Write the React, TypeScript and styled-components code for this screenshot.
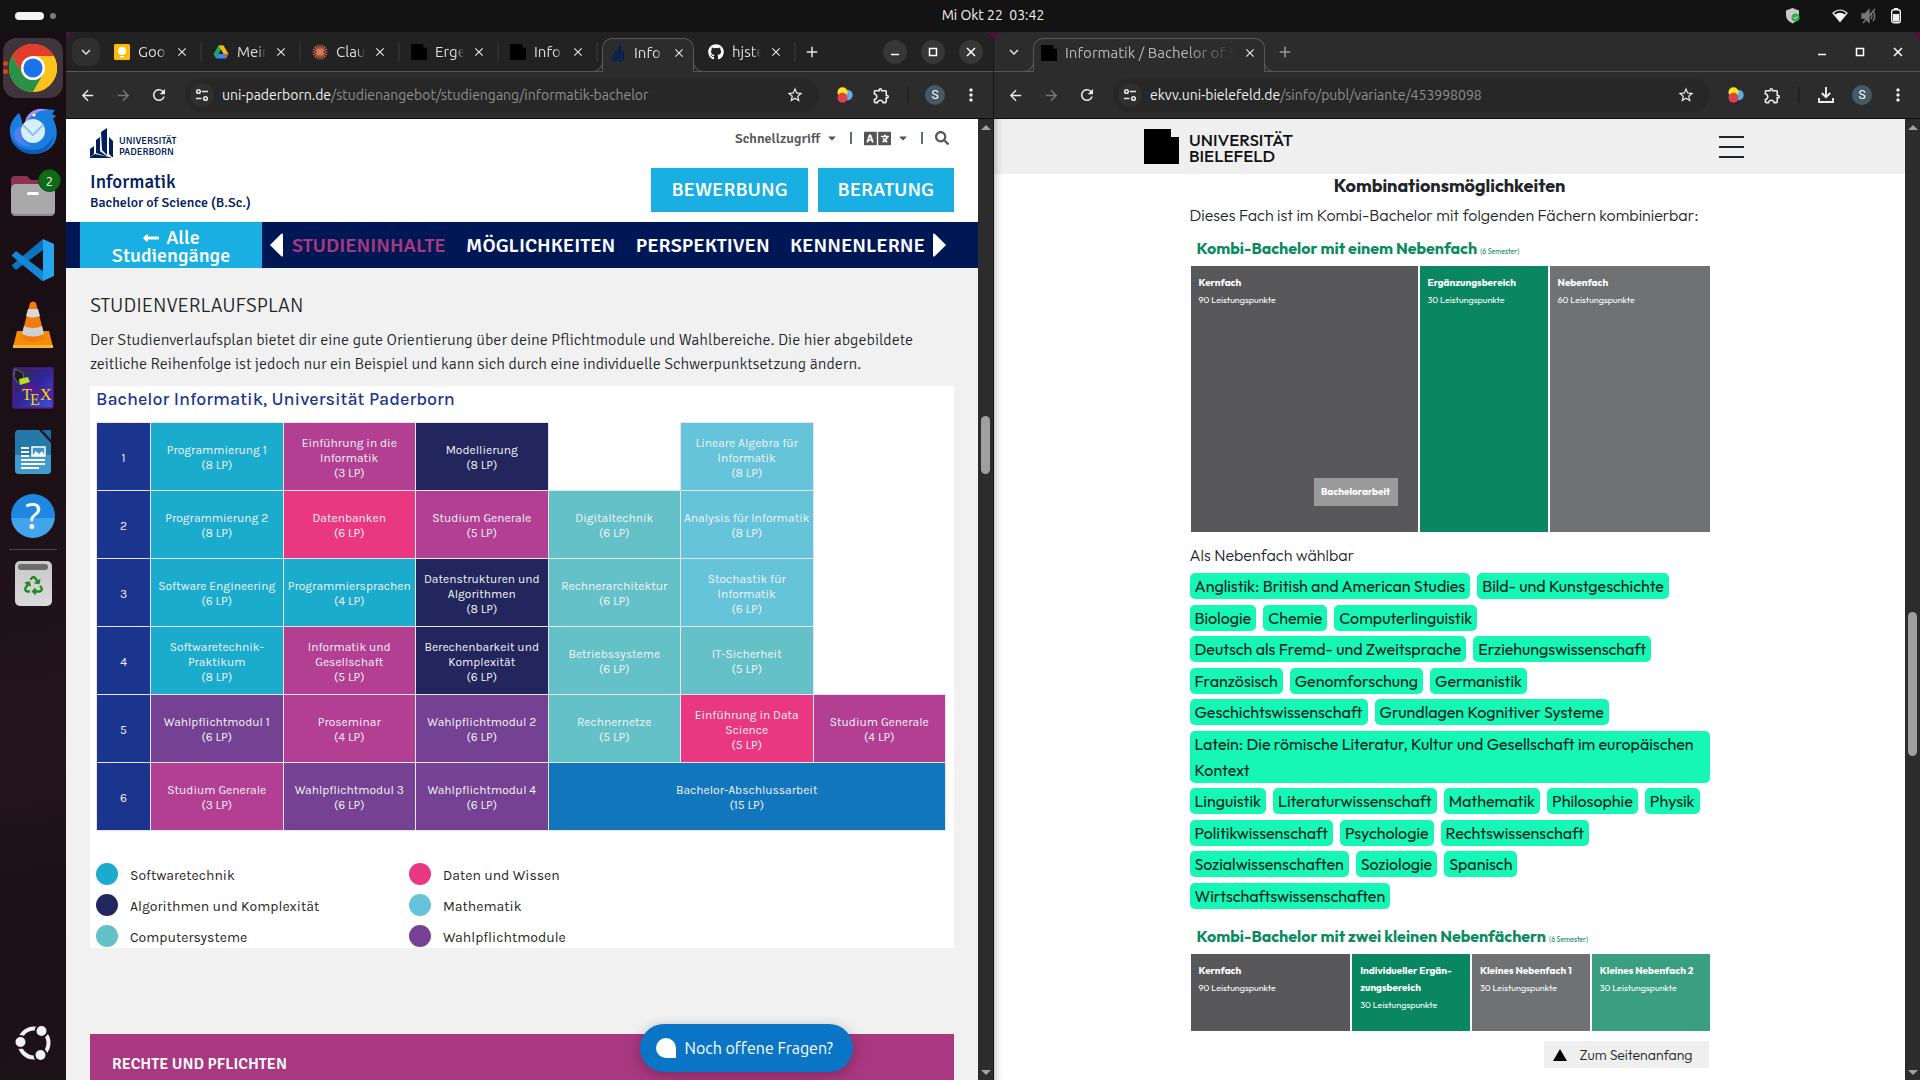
import React from "react";
import styled, { createGlobalStyle, css } from "styled-components";
import {
  MdAdd,
  MdArrowBack,
  MdArrowForward,
  MdClose,
  MdKeyboardArrowDown,
  MdMoreVert,
  MdOutlineExtension,
  MdRefresh,
  MdStarOutline,
} from "react-icons/md";
import {
  FaCaretDown,
  FaGithub,
  FaLanguage,
  FaLongArrowAltLeft,
  FaRecycle,
  FaSearch,
} from "react-icons/fa";

const ui = `Ubuntu, "Noto Sans", sans-serif`;
const signika = `"Signika Negative", "Open Sans", sans-serif`;
const karla = `Karla, Inter, sans-serif`;
const outfit = `Outfit, Lato, sans-serif`;

const Global = createGlobalStyle`
  *, *::before, *::after { box-sizing: border-box; }
  body { margin: 0; background: #131313; overflow: hidden; }
  button { border: 0; padding: 0; background: none; font: inherit; color: inherit; cursor: pointer; }
  h1, h2, h3, p, ul, figure { margin: 0; padding: 0; }
  ul { list-style: none; }
  a { color: inherit; text-decoration: none; }
  svg { display: block; flex: none; }
`;

/* ---------- desktop shell ---------- */

const Screen = styled.div`
  display: grid;
  grid-template-rows: 32px minmax(0, 1fr);
  height: 100vh;
  font-family: ${ui};
`;

const TopBar = styled.header`
  display: grid;
  grid-template-columns: 66px 1fr auto 1fr;
  align-items: center;
  background: #131313;
  color: #f2f2f2;
  font-size: 14px;
`;

const Workspaces = styled.div`
  display: flex;
  align-items: center;
  gap: 6px;
  padding-left: 15px;
`;

const Pill = styled.span<{ $active?: boolean }>`
  width: ${(p) => (p.$active ? 29 : 6)}px;
  height: ${(p) => (p.$active ? 8 : 6)}px;
  border-radius: 4px;
  background: ${(p) => (p.$active ? "#f4f4f4" : "#7d7d7d")};
`;

const Clock = styled.time`
  grid-column: 3;
  padding-bottom: 2px;
  white-space: pre;
`;

const Status = styled.div`
  display: flex;
  justify-content: flex-end;
  align-items: center;
  gap: 13px;
  padding-right: 18px;
`;

const StatusGap = styled.span`
  width: 6px;
`;

const Desktop = styled.div`
  display: grid;
  grid-template-columns: 66px minmax(0, 928fr) minmax(0, 926fr);
  min-height: 0;
  background: #4a1436;
`;

const Dock = styled.nav`
  display: flex;
  flex-direction: column;
  align-items: center;
  padding: 4px 0 5px;
  background: linear-gradient(170deg, #190d14 0%, #1c1017 40%, #24141d 70%, #1c1017 82%, #1d1218 100%);
`;

const DockItem = styled.button<{ $active?: boolean }>`
  position: relative;
  display: grid;
  place-items: center;
  width: 60px;
  height: 60px;
  margin: 2px 0;
  flex: none;
  border-radius: 14px;
  background: ${(p) => (p.$active ? "#40353c" : "transparent")};
`;

const RunDots = styled.span`
  position: absolute;
  left: 0;
  top: 23px;
  display: grid;
  gap: 3px;
  &::before,
  &::after {
    content: "";
    width: 5px;
    height: 5px;
    border-radius: 50%;
    background: #d9480f;
  }
`;

const DockBadge = styled.span`
  position: absolute;
  top: 3px;
  right: 2px;
  display: grid;
  place-items: center;
  width: 23px;
  height: 23px;
  border-radius: 50%;
  border: 1px solid #0a4a10;
  background: #0e6b18;
  color: #fff;
  font-size: 13px;
`;

const DockRule = styled.hr`
  width: 48px;
  height: 1px;
  margin: 1px 0;
  border: 0;
  flex: none;
  background: #4d434a;
`;

const DockSpacer = styled.span`
  flex: 1;
`;

/* ---------- browser chrome ---------- */

const Window = styled.section<{ $divider?: boolean }>`
  display: grid;
  grid-template-rows: 40px 47px minmax(0, 1fr);
  min-width: 0;
  min-height: 0;
  overflow: hidden;
  border-radius: 12px 12px 0 0;
  background: #2c2c2c;
  ${(p) =>
    p.$divider &&
    css`
      border-right: 1px solid #161616;
    `}
`;

const TabStrip = styled.div<{ $focused?: boolean }>`
  display: flex;
  align-items: center;
  padding-left: 6px;
  padding-right: 10px;
  border-bottom: 1px solid #575757;
  background: ${(p) => (p.$focused ? "#222222" : "#2c2c2c")};
  color: ${(p) => (p.$focused ? "#dedede" : "#b9b9b9")};
  font-size: 15px;
`;

const TabSearch = styled.button<{ $filled?: boolean }>`
  display: grid;
  place-items: center;
  width: 28px;
  height: 28px;
  margin-right: ${(p) => (p.$filled ? 3 : 0)}px;
  border-radius: 10px;
  background: ${(p) => (p.$filled ? "#2f2f2f" : "transparent")};
  color: #e2e2e2;
`;

const Tab = styled.div<{ $active?: boolean; $wide?: boolean }>`
  position: relative;
  display: flex;
  align-items: center;
  gap: 8px;
  height: 34px;
  width: ${(p) => (p.$wide ? 232 : p.$active ? 92 : 99)}px;
  padding: 0 ${(p) => (p.$active ? 7 : 11)}px;
  ${(p) =>
    p.$active
      ? css`
          align-self: flex-end;
          margin: 0 ${p.$wide ? 4 : 3}px -1px ${p.$wide ? 5 : 4}px;
          padding-bottom: 6px;
          border: 1px solid #575757;
          border-bottom: 0;
          border-radius: 10px 10px 0 0;
          background: #2c2c2c;
          &::before,
          &::after {
            content: "";
            position: absolute;
            bottom: 0;
            width: 10px;
            height: 10px;
            border-bottom: 1px solid #575757;
          }
          &::before {
            right: 100%;
            border-right: 1px solid #575757;
            border-bottom-right-radius: 10px;
          }
          &::after {
            left: 100%;
            border-left: 1px solid #575757;
            border-bottom-left-radius: 10px;
          }
        `
      : css`
          border-right: 2px solid #2e2e2e;
          height: 20px;
        `}
`;

const TabTitle = styled.span`
  flex: 1;
  min-width: 0;
  overflow: hidden;
  white-space: nowrap;
  line-height: 20px;
  mask-image: linear-gradient(to right, #000 70%, transparent 100%);
`;

const TabClose = styled.button`
  display: grid;
  place-items: center;
  width: 14px;
  color: #e6e6e6;
`;

const NewTab = styled.button<{ $dim?: boolean }>`
  display: grid;
  place-items: center;
  width: 28px;
  height: 28px;
  margin-left: 2px;
  color: ${(p) => (p.$dim ? "#9a9a9a" : "#e6e6e6")};
`;

const WindowButtons = styled.div`
  display: flex;
  gap: 14px;
  margin-left: auto;
`;

const WindowButton = styled.button<{ $filled?: boolean }>`
  display: grid;
  place-items: center;
  width: 24px;
  height: 24px;
  border-radius: 50%;
  background: ${(p) => (p.$filled ? "#373737" : "transparent")};
  color: #fff;
`;

const Toolbar = styled.div`
  display: flex;
  align-items: center;
  padding: 0 4px 0 3px;
  border-bottom: 1px solid #0d0d0d;
  color: #e6e6e6;
`;

const ToolButton = styled.button<{ $dim?: boolean }>`
  display: grid;
  place-items: center;
  width: 36px;
  height: 34px;
  flex: none;
  color: ${(p) => (p.$dim ? "#777777" : "#ececec")};
`;

const Omnibox = styled.div`
  display: flex;
  align-items: center;
  flex: 1;
  min-width: 0;
  height: 34px;
  margin: 0 8px;
  padding: 0 6px 0 5px;
  border-radius: 17px;
  background: #272727;
  font-size: 14px;
`;

const SiteInfo = styled.button`
  display: grid;
  place-items: center;
  width: 24px;
  height: 24px;
  border-radius: 50%;
  background: #2f2f2f;
  color: #e6e6e6;
`;

const Url = styled.span`
  flex: 1;
  min-width: 0;
  overflow: hidden;
  margin-left: 8px;
  white-space: nowrap;
  color: #8f8f8f;
`;

const Host = styled.span`
  color: #f0f0f0;
`;

const ToolRule = styled.span`
  width: 2px;
  height: 16px;
  margin: 0 8px;
  background: #222222;
`;

const Avatar = styled.span`
  display: grid;
  place-items: center;
  width: 20px;
  height: 20px;
  border-radius: 50%;
  background: #455a64;
  color: #fff;
  font: 12px/20px Roboto, sans-serif;
`;

const Viewport = styled.div`
  display: grid;
  grid-template-columns: minmax(0, 1fr) 15px;
  min-height: 0;
`;

const ScrollRail = styled.div`
  display: flex;
  flex-direction: column;
  align-items: center;
  background: #2c2c2c;
`;

const ScrollArrow = styled.span<{ $down?: boolean }>`
  display: grid;
  place-items: center;
  height: 16px;
  &::before {
    content: "";
    border: 5px solid transparent;
    ${(p) =>
      p.$down
        ? "border-top-color: #a0a0a0; border-bottom: 0;"
        : "border-bottom-color: #a0a0a0; border-top: 0;"}
  }
`;

const ScrollPart = styled.span<{ $share: number; $thumb?: boolean }>`
  flex: ${(p) => p.$share} 1 0;
  width: 9px;
  border-radius: 5px;
  background: ${(p) => (p.$thumb ? "#9f9f9f" : "transparent")};
`;

/* ---------- Paderborn page ---------- */

const PbPage = styled.div`
  position: relative;
  overflow: hidden;
  background: #f1f1f1;
  color: #212529;
  font-family: ${signika};
  font-weight: 300;
`;

const PbHeader = styled.header`
  display: flex;
  justify-content: space-between;
  height: 103px;
  padding: 9px 24px 0;
  background: #fff;
  color: #00205b;
  font-weight: 400;
`;

const PbBrand = styled.a`
  display: flex;
  align-items: flex-end;
  gap: 6px;
  height: 30px;
  font-size: 10px;
  line-height: 11px;
  font-weight: 500;
`;

const PbTitle = styled.h1`
  margin-top: 13px;
  font-size: 19px;
  line-height: 22px;
  font-weight: 500;
`;

const PbDegree = styled.p`
  font-size: 14px;
  line-height: 20px;
  font-weight: 500;
`;

const PbTools = styled.div`
  display: flex;
  flex-direction: column;
  align-items: flex-end;
`;

const PbQuick = styled.div`
  display: flex;
  align-items: center;
  height: 20px;
  padding-right: 5px;
  font-size: 14px;
  font-weight: 600;
  color: #555555;
`;

const PbQuickButton = styled.button`
  display: flex;
  align-items: center;
  gap: 6px;
`;

const PbQuickRule = styled.span`
  width: 2px;
  height: 12px;
  margin: 0 12px;
  background: #5e6b7d;
`;

const PbActions = styled.div`
  display: flex;
  gap: 10px;
  margin-top: 20px;
`;

const PbAction = styled.a`
  padding: 0 20px;
  background: #1aafe2;
  color: #fff;
  font-size: 20px;
  line-height: 44px;
  font-weight: 500;
`;

const PbNav = styled.nav`
  display: flex;
  align-items: center;
  height: 46px;
  padding: 0 32px 0 14px;
  background: #001755;
  color: #fff;
`;

const PbBack = styled.a`
  display: flex;
  flex: none;
  flex-direction: column;
  align-items: center;
  justify-content: center;
  width: 182px;
  height: 46px;
  margin-right: 8px;
  padding-top: 2px;
  background: #1aafe2;
  font-size: 20px;
  line-height: 17px;
  font-weight: 500;
`;

const PbBackLine = styled.span`
  display: flex;
  align-items: center;
  gap: 6px;
`;

const PbLinks = styled.ul`
  display: flex;
  flex: 1;
  justify-content: space-between;
  min-width: 0;
  padding: 0 8px 0 9px;
  font-size: 20px;
  font-weight: 600;
`;

const PbLink = styled.a<{ $current?: boolean }>`
  color: ${(p) => (p.$current ? "#a8387f" : "#fff")};
`;

const PbBody = styled.main`
  padding: 26px 24px 0;
`;

const PbHeading = styled.h2`
  font-size: 20px;
  line-height: 24px;
  font-weight: 300;
`;

const PbText = styled.p`
  margin-top: 10px;
  font-size: 16px;
  line-height: 24px;
`;

const Plan = styled.figure`
  margin-top: 10px;
  padding: 0 8px 1px 6px;
  background: #fff;
  font-family: ${karla};
  font-weight: 400;
`;

const PlanTitle = styled.figcaption`
  height: 36px;
  font-size: 18px;
  line-height: 27px;
  font-weight: 500;
  color: #1b358f;
`;

const PlanTable = styled.table`
  width: 100%;
  table-layout: fixed;
  border-collapse: collapse;
  font-size: 12px;
  line-height: 15px;
  text-align: center;
  color: #f4f4f8;
`;

const PlanCell = styled.td<{ $tone?: string }>`
  height: 68px;
  padding: 3px 0 0;
  white-space: nowrap;
  ${(p) =>
    p.$tone &&
    css`
      border: 1px solid #e6e6f0;
      background: ${p.$tone};
    `}
`;

const PlanTerm = styled.th`
  width: 54px;
  padding: 3px 0 0;
  border: 1px solid #e6e6f0;
  background: #1b358f;
  font-weight: 400;
`;

const Legend = styled.div`
  display: grid;
  grid-template-columns: 313px 1fr;
  row-gap: 9px;
  margin-top: 32px;
  font-size: 14px;
  line-height: 19px;
  color: #1f1f1f;
`;

const LegendItem = styled.span<{ $tone: string }>`
  display: flex;
  align-items: flex-end;
  gap: 12px;
  height: 22px;
  &::before {
    content: "";
    width: 22px;
    height: 22px;
    border-radius: 50%;
    background: ${(p) => p.$tone};
  }
`;

const PbPanel = styled.section`
  margin-top: 86px;
  padding: 18px 22px;
  min-height: 60px;
  background: #a8387f;
  color: #fff;
`;

const PbPanelTitle = styled.h2`
  font-size: 16px;
  line-height: 24px;
  font-weight: 600;
`;

const ChatButton = styled.button`
  position: absolute;
  right: 125px;
  bottom: 8px;
  display: flex;
  align-items: center;
  gap: 8px;
  height: 48px;
  padding: 0 20px 0 16px;
  border-radius: 24px;
  background: #0a74c5;
  box-shadow: 0 3px 14px rgba(0, 0, 0, 0.25);
  color: #fff;
  font: 16px/20px ${ui};
`;

const ChatMark = styled.span`
  width: 20px;
  height: 20px;
  border-radius: 10px 10px 0 10px;
  background: #fff;
`;

/* ---------- Bielefeld page ---------- */

const BiPage = styled.div`
  overflow: hidden;
  background: #fff;
  color: #212529;
  font-family: ${outfit};
  box-shadow: inset 8px 0 8px -8px rgba(0, 0, 0, 0.4);
`;

const BiHeader = styled.header`
  display: flex;
  justify-content: center;
  height: 55px;
  background: #efefef;
  box-shadow: inset 8px 0 8px -8px rgba(0, 0, 0, 0.4);
`;

const BiHeaderInner = styled.div`
  display: flex;
  align-items: center;
  justify-content: space-between;
  width: 100%;
  max-width: 611px;
  padding-right: 11px;
`;

const BiBrand = styled.a`
  display: flex;
  align-items: flex-end;
  gap: 10px;
  font-size: 17px;
  line-height: 16px;
  font-weight: 500;
  color: #111;
`;

const Burger = styled.button`
  display: grid;
  gap: 8px;
  width: 25px;
`;

const BurgerLine = styled.span`
  height: 2px;
  background: #212529;
`;

const BiColumn = styled.main`
  display: flex;
  flex-direction: column;
  width: 100%;
  max-width: 520px;
  margin: 0 auto;
`;

const BiHeading = styled.h2`
  font-size: 18px;
  line-height: 24px;
  font-weight: 700;
  text-align: center;
`;

const BiText = styled.p`
  margin-top: 4px;
  font-size: 16px;
  line-height: 26px;
  font-weight: 300;
`;

const ModelTitle = styled.h3`
  padding: 0 7px;
  font-size: 16px;
  line-height: 24px;
  font-weight: 700;
  color: #0b8a62;
  white-space: nowrap;
`;

const Small = styled.small`
  font-size: 7px;
  font-weight: 400;
`;

const Model = styled.div<{ $columns: string; $height: number }>`
  display: grid;
  grid-template-columns: ${(p) => p.$columns};
  gap: 2px;
  min-height: ${(p) => p.$height}px;
  padding-left: 1px;
`;

const Block = styled.div<{ $tone: string }>`
  display: flex;
  flex-direction: column;
  padding: 8px 0 0 8px;
  background: ${(p) => p.$tone};
  color: #fff;
  font-size: 9px;
  line-height: 17px;
  white-space: nowrap;
`;

const BlockTitle = styled.strong`
  font-size: 10px;
  font-weight: 700;
`;

const Thesis = styled.span`
  align-self: flex-end;
  margin: auto 20px 26px 0;
  width: 84px;
  background: #9a9a9b;
  font-size: 10px;
  line-height: 28px;
  font-weight: 700;
  text-align: center;
`;

const Chips = styled.div`
  display: flex;
  flex-direction: column;
  justify-content: space-between;
  min-height: 336px;
  margin-bottom: 15px;
`;

const ChipRow = styled.ul`
  display: flex;
  gap: 7px;
`;

const Chip = styled.a<{ $wrap?: boolean }>`
  display: block;
  padding: 0 5px;
  border-radius: 5px;
  background: #16f7b6;
  color: #04261c;
  font-size: 16px;
  line-height: 26px;
  white-space: ${(p) => (p.$wrap ? "normal" : "nowrap")};
`;

const ToTop = styled.a`
  display: flex;
  align-items: center;
  align-self: flex-end;
  gap: 12px;
  height: 27px;
  margin-top: 10px;
  margin-right: 1px;
  padding: 0 16px 0 9px;
  background: #efefef;
  font-size: 14px;
  font-weight: 300;
`;

const ModelIntro = styled.div`
  margin: 8px 0 2px;
`;

const SmallModel = styled(Model)`
  margin-top: 2px;
`;

const MinorIntro = styled(BiText)`
  margin: 10px 0 5px;
`;

/* ---------- drawings ---------- */

const ChromeIcon = () => (
  <svg width="48" height="48" viewBox="0 0 48 48">
    <circle cx="24" cy="24" r="24" fill="#fbbc04" />
    <path d="M24 12H44.8A24 24 0 0 0 3.2 12L13.6 30 24 12Z" fill="#e33b2e" />
    <path d="M3.2 12A24 24 0 0 0 24 48L34.4 30A12 12 0 0 1 13.6 30Z" fill="#2a9147" />
    <path d="M44.8 12H24A12 12 0 0 1 34.4 30L24 48A24 24 0 0 0 44.8 12Z" fill="#fcc31c" />
    <circle cx="24" cy="24" r="12" fill="#fff" />
    <circle cx="24" cy="24" r="9.6" fill="#1a73e8" />
  </svg>
);

const ThunderbirdIcon = () => (
  <svg width="48" height="48" viewBox="0 0 48 48">
    <path d="M1 25C0 17 4 10 10 5 13 10 13 15 14 20L17 11C20 4 27 1 34 1L46 2 43 6 47 8 44 11C49 20 49 30 44 37 38 45 29 46 23 46 12 45 2 38 1 25Z" fill="#1a7de0" />
    <path d="M16 14C18 5 26 0 34 1L40 2C30 2 24 6 20 11Z" fill="#a88df0" />
    <path d="M5 27C6 20 10 17 14 20 10 25 13 35 22 38 14 39 6 35 5 27Z" fill="#4f7ff0" />
    <path d="M3 30C7 39 15 42 24 42 34 42 41 36 45 27 44 39 34 46 23 46 12 45 5 39 3 30Z" fill="#0c5bb8" />
    <circle cx="24" cy="23" r="12" fill="#d7effc" />
    <path d="M14 17 24 27 34 17" fill="none" stroke="#7eb8e6" strokeWidth="1.6" />
    <circle cx="25" cy="7" r="1.6" fill="#fff" />
  </svg>
);

const FilesIcon = () => (
  <svg width="48" height="48" viewBox="0 0 48 48">
    <path d="M2 8Q2 4 6 4H18L22 8H42Q46 8 46 12V24H2Z" fill="#8c3350" />
    <rect x="2" y="12" width="44" height="32" rx="5" fill="#a9a9a9" />
    <path d="M2 38V39Q2 44 7 44H41Q46 44 46 39V38Q46 42 41 42H7Q2 42 2 38Z" fill="#8c8c8c" />
    <rect x="18" y="20" width="12" height="3" rx="1.5" fill="#fff" />
  </svg>
);

const CodeIcon = () => (
  <svg width="44" height="44" viewBox="0 0 44 44">
    <path d="M1 28 5 32 32 12V1L1 27Z" fill="#0a74bd" />
    <path d="M1 17 5 13 33 34V43Q31 43 30 42L1 18Z" fill="#1488d6" />
    <path d="M32 1 43 6V38L32 43Z" fill="#26a4f0" />
  </svg>
);

const ConeIcon = () => (
  <svg width="42" height="48" viewBox="0 0 42 48">
    <path d="M5 31H37L41 47H1Z" fill="#f58a0b" />
    <path d="M1 45H41V48H1Z" fill="#ffb52e" />
    <path d="M18 3Q21 0 24 3L33 38Q21 46 9 38Z" fill="#f27d0a" />
    <path d="M16 9H26L28 16Q21 19 14 16Z" fill="#d9d9d9" />
    <path d="M12 26Q21 30 30 26L32 34Q21 39 10 34Z" fill="#d0d0d0" />
  </svg>
);

const TexText = styled.text`
  font-family: "Liberation Serif", serif;
  font-size: 16px;
  fill: #f5d800;
`;

const TexIcon = () => (
  <svg width="42" height="42" viewBox="0 0 42 42">
    <defs>
      <linearGradient id="texBg" x1="0" y1="0" x2="1" y2="1">
        <stop offset="0" stopColor="#2c2c40" />
        <stop offset=".5" stopColor="#32249a" />
        <stop offset="1" stopColor="#3a55d8" />
      </linearGradient>
    </defs>
    <rect x="1" y="1" width="40" height="40" rx="2" fill="url(#texBg)" stroke="#5b1a8a" strokeWidth="1.5" />
    <path d="M12 14 40 24 40 34 8 24Z" fill="#5a1890" opacity=".7" />
    <path d="M3 2 11 6 12 14 6 16 2 10Z" fill="#1c1c1c" stroke="#999" strokeWidth=".6" />
    <path d="M7 12 16 10 18 15 8 18Z" fill="#b8e020" />
    <TexText x="10" y="33">T</TexText>
    <TexText x="18" y="38">E</TexText>
    <TexText x="28" y="33">X</TexText>
  </svg>
);

const WriterIcon = () => (
  <svg width="38" height="46" viewBox="0 0 38 46">
    <path d="M4 1H25L37 14V41Q37 45 33 45H5Q1 45 1 41V5Q1 1 4 1Z" fill="#2479a8" />
    <path d="M1 26H37V41Q37 45 33 45H5Q1 45 1 41Z" fill="#3f9ccd" />
    <path d="M28 1H37V11Z" fill="#1c6d9c" />
    <g stroke="#fff" strokeWidth="2">
      <path d="M7 19H15M7 23H15M7 27H15M7 31H31M7 35H31M7 39H25" />
      <rect x="18" y="18" width="13" height="9" fill="#3b97c8" strokeWidth="1.5" />
    </g>
    <path d="M18 27 22 22 25 25 28 22 31 27Z" fill="#fff" />
  </svg>
);

const HelpDisc = styled.span`
  display: grid;
  place-items: center;
  width: 44px;
  height: 44px;
  border-radius: 50%;
  background: linear-gradient(#1e88e0 0 55%, #42a5ec 55% 100%);
  color: #fff;
  font: 36px/44px "Noto Sans", sans-serif;
`;

const TrashBody = styled.span`
  display: grid;
  grid-template-rows: 6px 1fr;
  justify-items: center;
  align-items: center;
  width: 37px;
  height: 45px;
  padding: 3px 3px 4px;
  border-radius: 5px;
  background: linear-gradient(#c8c8c8, #dadada);
  color: #1f8a1f;
`;

const TrashSlot = styled.span`
  width: 30px;
  height: 6px;
  border-radius: 3px;
  background: #6c6c6c;
`;

const UbuntuMark = () => (
  <svg width="38" height="38" viewBox="0 0 38 38">
    <circle cx="20" cy="19" r="14.500" fill="none" stroke="#f2f2f2" strokeWidth="4" />
    <g fill="#f2f2f2" stroke="#1d1218" strokeWidth="2">
      <circle cx="6.500" cy="18" r="6" />
      <circle cx="27.500" cy="7" r="6" />
      <circle cx="26.500" cy="31" r="6" />
    </g>
  </svg>
);

const TowerMark = ({ size = 30 }: { size?: number }) => (
  <svg width={size === 30 ? 23 : 16} height={size} viewBox="0 0 23 30" fill="#00205b">
    <path d="M0 21 4 18V26L0 29ZM6 12 10 9V23L18 29 6 25ZM11 4 17 0V27L12 22ZM19 9 23 13V29H22L19 26Z" />
    <path d="M0 30V29L5 26 21 29.400V30Z" />
  </svg>
);

const BlackPage = ({ size = 16 }: { size?: number }) => (
  <svg width={size} height={size} viewBox="0 0 35 35">
    <path d="M0 0H27V8H35V35H0Z" fill="#000" />
  </svg>
);

const KeepMark = () => (
  <svg width="16" height="16" viewBox="0 0 16 16">
    <rect width="16" height="16" rx="1.500" fill="#fbbc04" />
    <circle cx="8" cy="7" r="4" fill="#fff" />
    <path d="M6 10H10V11H6ZM6 12H10V13.500H6Z" fill="#fff" />
  </svg>
);

const DriveMark = () => (
  <svg width="16" height="16" viewBox="0 0 16 16">
    <path d="M5.500 1.500H10.500L8 6 3 14.500 .5 10Z" fill="#1fa463" />
    <path d="M10.500 1.500 15.500 10H10.500L5.500 1.500Z" fill="#fbbc04" />
    <path d="M5.500 10H15.500L13 14.500H3Z" fill="#4285f4" />
    <path d="M8 6 10.300 10H5.600Z" fill="#222" />
    <path d="M12 10H15.500L13 14.500Z" fill="#ea4335" />
  </svg>
);

const BurstMark = () => (
  <svg width="16" height="16" viewBox="0 0 16 16" stroke="#d97757" strokeWidth="1.1" strokeLinecap="round">
    <path d="M8 .8V15.200M.8 8H15.200M3 3 13 13M13 3 3 13M5.200 1.400 10.800 14.600M10.800 1.400 5.200 14.600M1.400 5.200 14.600 10.800M1.400 10.800 14.600 5.200" />
  </svg>
);

const TuneIcon = () => (
  <svg width="14" height="14" viewBox="0 0 14 14" fill="none" stroke="currentColor" strokeWidth="1.600">
    <circle cx="3.500" cy="3.500" r="1.800" />
    <path d="M7 3.500H13M1 10.500H6.500" />
    <circle cx="10.500" cy="10.500" r="1.800" />
  </svg>
);

const DownloadIcon = () => (
  <svg width="16" height="16" viewBox="0 0 16 16" fill="none" stroke="currentColor" strokeWidth="1.900">
    <path d="M8 0V10M3.800 6 8 10.200 12.200 6M1 11V15H15V11" />
  </svg>
);

const BallsIcon = () => (
  <svg width="16" height="16" viewBox="0 0 16 16">
    <circle cx="10.500" cy="8" r="5.200" fill="#5aaef0" />
    <circle cx="5.500" cy="5.200" r="5" fill="#ffe81a" />
    <circle cx="5.500" cy="10.800" r="5" fill="#e0404c" />
  </svg>
);

const MinIcon = () => (
  <svg width="12" height="12" viewBox="0 0 12 12" stroke="currentColor" strokeWidth="1.500">
    <path d="M2 8.500H10" />
  </svg>
);

const MaxIcon = () => (
  <svg width="12" height="12" viewBox="0 0 12 12" fill="none" stroke="currentColor" strokeWidth="1.500">
    <rect x="2.500" y="2.500" width="7" height="7" />
  </svg>
);

const CloseIcon = () => (
  <svg width="12" height="12" viewBox="0 0 12 12" stroke="currentColor" strokeWidth="1.500">
    <path d="M2 2 10 10M10 2 2 10" />
  </svg>
);

const ShieldIcon = () => (
  <svg width="14" height="16" viewBox="0 0 14 16">
    <path d="M6.500 0 13 2.500V7Q13 12.500 6.500 15.500 0 12.500 0 7V2.500Z" fill="#c9c9c9" />
    <circle cx="9.500" cy="9.500" r="4" fill="#2fae4a" />
    <path d="M7.700 9.600 9 10.900 11.300 8.400" fill="none" stroke="#fff" />
  </svg>
);

const WifiIcon = () => (
  <svg width="16" height="14" viewBox="0 0 16 14">
    <path d="M1 4Q8-2 15 4L8 12.500Z" fill="none" stroke="#f2f2f2" strokeWidth="1.200" />
    <path d="M3 5.500Q8 2 13 5.500L8 12.500Z" fill="#f2f2f2" />
  </svg>
);

const MuteIcon = () => (
  <svg width="16" height="16" viewBox="0 0 16 16" fill="none" stroke="#777" strokeWidth="1.400">
    <path d="M1 6H4L8 2V14L4 10H1Z" fill="#777" />
    <path d="M10 5Q12 8 10 11M12 3Q15.500 8 12 13" />
    <path d="M14 1 2 15" />
  </svg>
);

const BatteryIcon = () => (
  <svg width="12" height="16" viewBox="0 0 12 16">
    <rect x="4" y="0" width="4" height="2" fill="#f2f2f2" />
    <rect x="1.700" y="1.700" width="8.600" height="13" rx="2" fill="none" stroke="#f2f2f2" strokeWidth="1.400" />
    <rect x="3" y="6" width="6" height="7.500" fill="#f2f2f2" />
  </svg>
);

const NavTriangle = ({ flip }: { flip?: boolean }) => (
  <svg width="13" height="24" viewBox="0 0 13 24" fill="#fff">
    <path d={flip ? "M0 1Q0 0 2 1L13 12 2 23Q0 24 0 23Z" : "M13 1Q13 0 11 1L0 12 11 23Q13 24 13 23Z"} />
  </svg>
);

const UpTriangle = () => (
  <svg width="14" height="12" viewBox="0 0 14 12">
    <path d="M7 0 14 12H0Z" />
  </svg>
);

/* ---------- composed parts ---------- */

type TabInfo = { title: string; icon: React.ReactNode; active?: boolean };

const Tabs = ({ tabs, focused }: { tabs: TabInfo[]; focused?: boolean }) => (
  <TabStrip $focused={focused}>
    <TabSearch $filled={focused} aria-label="Tabs durchsuchen">
      <MdKeyboardArrowDown size={18} />
    </TabSearch>
    {tabs.map((t, i) => (
      <Tab key={i} $active={t.active} $wide={tabs.length === 1}>
        {t.icon}
        <TabTitle>{t.title}</TabTitle>
        <TabClose aria-label="Tab schließen">
          <MdClose size={14} />
        </TabClose>
      </Tab>
    ))}
    <NewTab $dim={!focused} aria-label="Neuer Tab">
      <MdAdd size={18} />
    </NewTab>
    <WindowButtons>
      <WindowButton $filled={focused} aria-label="Minimieren">
        <MinIcon />
      </WindowButton>
      <WindowButton $filled={focused} aria-label="Maximieren">
        <MaxIcon />
      </WindowButton>
      <WindowButton $filled={focused} aria-label="Schließen">
        <CloseIcon />
      </WindowButton>
    </WindowButtons>
  </TabStrip>
);

const AddressBar = ({ host, path, download }: { host: string; path: string; download?: boolean }) => (
  <Toolbar>
    <ToolButton aria-label="Zurück">
      <MdArrowBack size={17} />
    </ToolButton>
    <ToolButton $dim aria-label="Vorwärts">
      <MdArrowForward size={17} />
    </ToolButton>
    <ToolButton aria-label="Neu laden">
      <MdRefresh size={18} />
    </ToolButton>
    <Omnibox>
      <SiteInfo aria-label="Website-Informationen">
        <TuneIcon />
      </SiteInfo>
      <Url>
        <Host>{host}</Host>
        {path}
      </Url>
      <ToolButton aria-label="Lesezeichen">
        <MdStarOutline size={18} />
      </ToolButton>
    </Omnibox>
    <ToolButton aria-label="Erweiterung">
      <BallsIcon />
    </ToolButton>
    <ToolButton aria-label="Erweiterungen">
      <MdOutlineExtension size={19} />
    </ToolButton>
    <ToolRule />
    {download && (
      <ToolButton aria-label="Downloads">
        <DownloadIcon />
      </ToolButton>
    )}
    <ToolButton aria-label="Profil">
      <Avatar>S</Avatar>
    </ToolButton>
    <ToolButton aria-label="Menü">
      <MdMoreVert size={20} />
    </ToolButton>
  </Toolbar>
);

const Scroll = ({ parts }: { parts: [number, number, number] }) => (
  <ScrollRail>
    <ScrollArrow />
    <ScrollPart $share={parts[0]} />
    <ScrollPart $share={parts[1]} $thumb />
    <ScrollPart $share={parts[2]} />
    <ScrollArrow $down />
  </ScrollRail>
);

const tone = {
  soft: "#1aabcd",
  data: "#ea3781",
  algo: "#22265c",
  math: "#65c3da",
  comp: "#64c1c7",
  elective: "#744193",
  general: "#b33f92",
  thesis: "#1176bc",
};

type Module = [string, keyof typeof tone, number?] | null;

const terms: Module[][] = [
  [["Programmierung 1\n(8 LP)", "soft"], ["Einführung in die\nInformatik\n(3 LP)", "general"], ["Modellierung\n(8 LP)", "algo"], null, ["Lineare Algebra für\nInformatik\n(8 LP)", "math"], null],
  [["Programmierung 2\n(8 LP)", "soft"], ["Datenbanken\n(6 LP)", "data"], ["Studium Generale\n(5 LP)", "general"], ["Digitaltechnik\n(6 LP)", "comp"], ["Analysis für Informatik\n(8 LP)", "math"], null],
  [["Software Engineering\n(6 LP)", "soft"], ["Programmiersprachen\n(4 LP)", "soft"], ["Datenstrukturen und\nAlgorithmen\n(8 LP)", "algo"], ["Rechnerarchitektur\n(6 LP)", "comp"], ["Stochastik für\nInformatik\n(6 LP)", "math"], null],
  [["Softwaretechnik-\nPraktikum\n(8 LP)", "soft"], ["Informatik und\nGesellschaft\n(5 LP)", "general"], ["Berechenbarkeit und\nKomplexität\n(6 LP)", "algo"], ["Betriebssysteme\n(6 LP)", "comp"], ["IT-Sicherheit\n(5 LP)", "comp"], null],
  [["Wahlpflichtmodul 1\n(6 LP)", "elective"], ["Proseminar\n(4 LP)", "general"], ["Wahlpflichtmodul 2\n(6 LP)", "elective"], ["Rechnernetze\n(5 LP)", "comp"], ["Einführung in Data\nScience\n(5 LP)", "data"], ["Studium Generale\n(4 LP)", "general"]],
  [["Studium Generale\n(3 LP)", "general"], ["Wahlpflichtmodul 3\n(6 LP)", "elective"], ["Wahlpflichtmodul 4\n(6 LP)", "elective"], ["Bachelor-Abschlussarbeit\n(15 LP)", "thesis", 3]],
];

const lines = (text: string) =>
  text.split("\n").map((line, i) => (
    <React.Fragment key={i}>
      {i > 0 && <br />}
      {line}
    </React.Fragment>
  ));

const legend: [string, string][] = [
  ["Softwaretechnik", tone.soft],
  ["Daten und Wissen", tone.data],
  ["Algorithmen und Komplexität", tone.algo],
  ["Mathematik", tone.math],
  ["Computersysteme", tone.comp],
  ["Wahlpflichtmodule", tone.elective],
];

const minors = [
  ["Anglistik: British and American Studies", "Bild- und Kunstgeschichte"],
  ["Biologie", "Chemie", "Computerlinguistik"],
  ["Deutsch als Fremd- und Zweitsprache", "Erziehungswissenschaft"],
  ["Französisch", "Genomforschung", "Germanistik"],
  ["Geschichtswissenschaft", "Grundlagen Kognitiver Systeme"],
  ["Latein: Die römische Literatur, Kultur und Gesellschaft im europäischen Kontext"],
  ["Linguistik", "Literaturwissenschaft", "Mathematik", "Philosophie", "Physik"],
  ["Politikwissenschaft", "Psychologie", "Rechtswissenschaft"],
  ["Sozialwissenschaften", "Soziologie", "Spanisch"],
  ["Wirtschaftswissenschaften"],
];

const Paderborn = () => (
  <PbPage>
    <PbHeader>
      <div>
        <PbBrand href="#">
          <TowerMark />
          <span>
            UNIVERSITÄT
            <br />
            PADERBORN
          </span>
        </PbBrand>
        <PbTitle>Informatik</PbTitle>
        <PbDegree>Bachelor of Science (B.Sc.)</PbDegree>
      </div>
      <PbTools>
        <PbQuick>
          <PbQuickButton>
            Schnellzugriff <FaCaretDown size={12} />
          </PbQuickButton>
          <PbQuickRule />
          <PbQuickButton aria-label="Sprache">
            <FaLanguage size={27} />
            <FaCaretDown size={12} />
          </PbQuickButton>
          <PbQuickRule />
          <PbQuickButton aria-label="Suche">
            <FaSearch size={14} />
          </PbQuickButton>
        </PbQuick>
        <PbActions>
          <PbAction href="#">BEWERBUNG</PbAction>
          <PbAction href="#">BERATUNG</PbAction>
        </PbActions>
      </PbTools>
    </PbHeader>
    <PbNav>
      <PbBack href="#">
        <PbBackLine>
          <FaLongArrowAltLeft size={18} /> Alle
        </PbBackLine>
        <span>Studiengänge</span>
      </PbBack>
      <NavTriangle />
      <PbLinks>
        <li><PbLink href="#" $current>STUDIENINHALTE</PbLink></li>
        <li><PbLink href="#">MÖGLICHKEITEN</PbLink></li>
        <li><PbLink href="#">PERSPEKTIVEN</PbLink></li>
        <li><PbLink href="#">KENNENLERNE</PbLink></li>
      </PbLinks>
      <NavTriangle flip />
    </PbNav>
    <PbBody>
      <PbHeading>STUDIENVERLAUFSPLAN</PbHeading>
      <PbText>
        Der Studienverlaufsplan bietet dir eine gute Orientierung über deine Pflichtmodule und Wahlbereiche. Die hier
        abgebildete zeitliche Reihenfolge ist jedoch nur ein Beispiel und kann sich durch eine individuelle
        Schwerpunktsetzung ändern.
      </PbText>
      <Plan>
        <PlanTitle>Bachelor Informatik, Universität Paderborn</PlanTitle>
        <PlanTable>
          <tbody>
            {terms.map((row, i) => (
              <tr key={i}>
                <PlanTerm scope="row">{i + 1}</PlanTerm>
                {row.map((m, j) =>
                  m ? (
                    <PlanCell key={j} $tone={tone[m[1]]} colSpan={m[2]}>
                      {lines(m[0])}
                    </PlanCell>
                  ) : (
                    <PlanCell key={j} />
                  )
                )}
              </tr>
            ))}
          </tbody>
        </PlanTable>
        <Legend>
          {legend.map(([name, color]) => (
            <LegendItem key={name} $tone={color}>
              {name}
            </LegendItem>
          ))}
        </Legend>
      </Plan>
      <PbPanel>
        <PbPanelTitle>RECHTE UND PFLICHTEN</PbPanelTitle>
      </PbPanel>
    </PbBody>
    <ChatButton>
      <ChatMark />
      Noch offene Fragen?
    </ChatButton>
  </PbPage>
);

const Bielefeld = () => (
  <BiPage>
    <BiHeader>
      <BiHeaderInner>
        <BiBrand href="#">
          <BlackPage size={35} />
          <span>
            UNIVERSITÄT
            <br />
            BIELEFELD
          </span>
        </BiBrand>
        <Burger aria-label="Menü">
          <BurgerLine />
          <BurgerLine />
          <BurgerLine />
        </Burger>
      </BiHeaderInner>
    </BiHeader>
    <BiColumn>
      <BiHeading>Kombinationsmöglichkeiten</BiHeading>
      <BiText>Dieses Fach ist im Kombi-Bachelor mit folgenden Fächern kombinierbar:</BiText>
      <ModelIntro>
        <ModelTitle>
          Kombi-Bachelor mit einem Nebenfach <Small>(6 Semester)</Small>
        </ModelTitle>
      </ModelIntro>
      <Model $columns="227fr 128fr 160fr" $height={266}>
        <Block $tone="#58585a">
          <BlockTitle>Kernfach</BlockTitle>
          <span>90 Leistungspunkte</span>
          <Thesis>Bachelorarbeit</Thesis>
        </Block>
        <Block $tone="#0a8661">
          <BlockTitle>Ergänzungsbereich</BlockTitle>
          <span>30 Leistungspunkte</span>
        </Block>
        <Block $tone="#707173">
          <BlockTitle>Nebenfach</BlockTitle>
          <span>60 Leistungspunkte</span>
        </Block>
      </Model>
      <MinorIntro>Als Nebenfach wählbar</MinorIntro>
      <Chips>
        {minors.map((row) => (
          <ChipRow key={row[0]}>
            {row.map((name) => (
              <li key={name}>
                <Chip href="#" $wrap={row.length === 1}>
                  {name}
                </Chip>
              </li>
            ))}
          </ChipRow>
        ))}
      </Chips>
      <ModelTitle>
        Kombi-Bachelor mit zwei kleinen Nebenfächern <Small>(6 Semester)</Small>
      </ModelTitle>
      <SmallModel $columns="160fr 118fr 118fr 118fr" $height={77}>
        <Block $tone="#58585a">
          <BlockTitle>Kernfach</BlockTitle>
          <span>90 Leistungspunkte</span>
        </Block>
        <Block $tone="#0a8661">
          <BlockTitle>
            Individueller Ergän-
            <br />
            zungsbereich
          </BlockTitle>
          <span>30 Leistungspunkte</span>
        </Block>
        <Block $tone="#707173">
          <BlockTitle>Kleines Nebenfach 1</BlockTitle>
          <span>30 Leistungspunkte</span>
        </Block>
        <Block $tone="#3a9f80">
          <BlockTitle>Kleines Nebenfach 2</BlockTitle>
          <span>30 Leistungspunkte</span>
        </Block>
      </SmallModel>
      <ToTop href="#">
        <UpTriangle /> Zum Seitenanfang
      </ToTop>
    </BiColumn>
  </BiPage>
);

export default function App() {
  return (
    <Screen>
      <Global />
      <TopBar>
        <Workspaces>
          <Pill $active />
          <Pill />
        </Workspaces>
        <Clock>{"Mi Okt 22  03:42"}</Clock>
        <Status>
          <ShieldIcon />
          <StatusGap />
          <WifiIcon />
          <MuteIcon />
          <BatteryIcon />
        </Status>
      </TopBar>
      <Desktop>
        <Dock>
          <DockItem $active aria-label="Chrome">
            <RunDots />
            <ChromeIcon />
          </DockItem>
          <DockItem aria-label="Thunderbird"><ThunderbirdIcon /></DockItem>
          <DockItem aria-label="Dateien">
            <FilesIcon />
            <DockBadge>2</DockBadge>
          </DockItem>
          <DockItem aria-label="Code"><CodeIcon /></DockItem>
          <DockItem aria-label="VLC"><ConeIcon /></DockItem>
          <DockItem aria-label="TeX"><TexIcon /></DockItem>
          <DockItem aria-label="Writer"><WriterIcon /></DockItem>
          <DockItem aria-label="Hilfe"><HelpDisc>?</HelpDisc></DockItem>
          <DockRule />
          <DockItem aria-label="Papierkorb">
            <TrashBody>
              <TrashSlot />
              <FaRecycle size={19} />
            </TrashBody>
          </DockItem>
          <DockSpacer />
          <DockItem aria-label="Anwendungen"><UbuntuMark /></DockItem>
        </Dock>
        <Window $divider>
          <Tabs
            focused
            tabs={[
              { title: "Goo", icon: <KeepMark /> },
              { title: "Mein", icon: <DriveMark /> },
              { title: "Clau", icon: <BurstMark /> },
              { title: "Erge", icon: <BlackPage /> },
              { title: "Info", icon: <BlackPage /> },
              { title: "Info", icon: <TowerMark size={16} />, active: true },
              { title: "hjste", icon: <FaGithub size={16} color="#fff" /> },
            ]}
          />
          <AddressBar host="uni-paderborn.de" path="/studienangebot/studiengang/informatik-bachelor" />
          <Viewport>
            <Paderborn />
            <Scroll parts={[281, 58, 590]} />
          </Viewport>
        </Window>
        <Window>
          <Tabs tabs={[{ title: "Informatik / Bachelor of S", icon: <BlackPage />, active: true }]} />
          <AddressBar host="ekvv.uni-bielefeld.de" path="/sinfo/publ/variante/453998098" download />
          <Viewport>
            <Bielefeld />
            <Scroll parts={[477, 144, 308]} />
          </Viewport>
        </Window>
      </Desktop>
    </Screen>
  );
}
